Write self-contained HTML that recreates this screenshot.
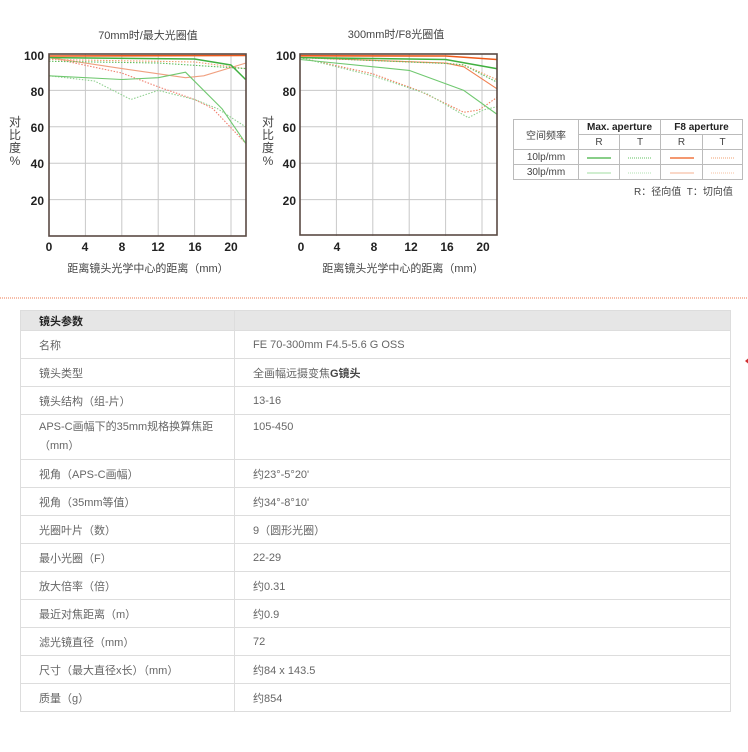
<!DOCTYPE html>
<html><head><meta charset="utf-8"><style>
body{margin:0;width:748px;height:752px;background:#fff;font-family:"Liberation Sans","Noto Sans CJK SC",sans-serif;position:relative;overflow:hidden;color:#333}
.a{position:absolute}
table.lg{position:absolute;left:513px;top:119px;border-collapse:collapse;font-size:10px;color:#444}
table.lg td{border:1px solid #bbb;text-align:center;padding:0;height:14px}
.sp{position:absolute;left:20px;top:310px;width:711px;border-collapse:collapse;font-size:11px;color:#666}
.sp td{border:1px solid #ddd;padding:0 0 0 18px;height:28px;box-sizing:border-box;vertical-align:middle}
.sp tr.h td{background:#e6e6e6;height:20px;color:#222;font-weight:bold}
.sp td:first-child{width:214px}
</style></head><body>
<svg class="a" style="left:0;top:0" width="748" height="300" font-family="Liberation Sans,Noto Sans CJK SC,sans-serif">
<g stroke="#c8c8c8" stroke-width="1">
<line x1="85.4" y1="54" x2="85.4" y2="236"/><line x1="121.8" y1="54" x2="121.8" y2="236"/><line x1="158.2" y1="54" x2="158.2" y2="236"/><line x1="194.6" y1="54" x2="194.6" y2="236"/><line x1="231" y1="54" x2="231" y2="236"/>
<line x1="49" y1="90.4" x2="246" y2="90.4"/><line x1="49" y1="126.8" x2="246" y2="126.8"/><line x1="49" y1="163.2" x2="246" y2="163.2"/><line x1="49" y1="199.6" x2="246" y2="199.6"/>
<line x1="336.4" y1="54" x2="336.4" y2="236"/><line x1="372.8" y1="54" x2="372.8" y2="236"/><line x1="409.2" y1="54" x2="409.2" y2="236"/><line x1="445.6" y1="54" x2="445.6" y2="236"/><line x1="482" y1="54" x2="482" y2="236"/>
<line x1="300" y1="90.4" x2="497" y2="90.4"/><line x1="300" y1="126.8" x2="497" y2="126.8"/><line x1="300" y1="163.2" x2="497" y2="163.2"/><line x1="300" y1="199.6" x2="497" y2="199.6"/>
</g>
<g fill="none" stroke-linejoin="round" stroke-width="1.1">
<polyline stroke="#f08070" stroke-dasharray="1.5 1.5" points="49,57.6 121.8,73 158.2,86.8 194.6,99.5 212.8,108.6 245.6,143.2"/>
<polyline stroke="#90d090" stroke-dasharray="1.5 1.5" points="49,75.8 94.5,81 130.9,99.5 158.2,90.4 194.6,99.5 217.4,108.6 245.6,126.8"/>
<polyline stroke="#f0a080" points="49,57.6 121.8,68.6 185.5,77.7 203.7,75.8 245.6,63.1"/>
<polyline stroke="#70c870" points="49,75.8 121.8,79.5 158.2,77.7 185.5,72.2 221.9,108.6 245.6,143.2"/>
<polyline stroke="#f0a070" stroke-dasharray="1.5 1.5" points="49,59.5 194.6,62 245.6,68.6"/>
<polyline stroke="#60c060" stroke-dasharray="1.5 1.5" points="49,61.3 158.2,63 245.6,68.6"/>
<polyline stroke="#40b040" stroke-width="1.5" points="49,57.6 194.6,59 231,65 245.6,79.5"/>
<polyline stroke="#ee5a1a" stroke-width="1.6" points="49,56 245.6,55.5"/>
<polyline stroke="#f08060" stroke-dasharray="1.5 1.5" points="300,57.6 372.8,73.8 418.3,90.4 463.8,112.3 479,110 496.6,97.7"/>
<polyline stroke="#90d090" stroke-dasharray="1.5 1.5" points="300,57.6 372.8,75.8 427.4,94 468.4,117.7 483,110 496.6,106.8"/>
<polyline stroke="#70c870" points="300,59.5 409.2,70.4 463.8,90.4 496.6,114"/>
<polyline stroke="#f08050" points="300,57.6 445.6,63.1 463.8,66.8 496.6,88.6"/>
<polyline stroke="#f0a070" stroke-dasharray="1.5 1.5" points="300,57.6 445.6,63.1 463.8,64.9 496.6,79.5"/>
<polyline stroke="#60c060" stroke-dasharray="1.5 1.5" points="300,57.6 445.6,63.5 463.8,65 496.6,82"/>
<polyline stroke="#40b040" stroke-width="1.5" points="300,57.6 445.6,59.5 496.6,68.6"/>
<polyline stroke="#ee5a1a" stroke-width="1.6" points="300,55.8 445.6,56 496.6,59.5"/>
</g>
<rect x="49" y="54" width="197" height="182" fill="none" stroke="#5a4a44" stroke-width="1.6"/>
<rect x="300" y="54" width="197" height="181" fill="none" stroke="#5a4a44" stroke-width="1.6"/>
<g font-size="11" fill="#444" text-anchor="middle">
<text x="148" y="39">70mm时/最大光圈值</text><text x="396" y="38">300mm时/F8光圈值</text>
<g font-size="12" font-weight="bold" fill="#222" text-anchor="end">
<text x="44" y="60">100</text><text x="44" y="96">80</text><text x="44" y="132">60</text><text x="44" y="168">40</text><text x="44" y="205">20</text>
<text x="296" y="60">100</text><text x="296" y="96">80</text><text x="296" y="132">60</text><text x="296" y="168">40</text><text x="296" y="205">20</text>
</g>
<g font-size="12" font-weight="bold" fill="#222">
<text x="49" y="251">0</text><text x="85" y="251">4</text><text x="122" y="251">8</text><text x="158" y="251">12</text><text x="195" y="251">16</text><text x="231" y="251">20</text>
<text x="301" y="251">0</text><text x="337" y="251">4</text><text x="374" y="251">8</text><text x="411" y="251">12</text><text x="447" y="251">16</text><text x="483" y="251">20</text>
</g>
<text x="148" y="272">距离镜头光学中心的距离（mm）</text><text x="403" y="272">距离镜头光学中心的距离（mm）</text>
<g font-size="12"><text x="15" y="126">对</text><text x="15" y="139">比</text><text x="15" y="152">度</text><text x="15" y="165">%</text>
<text x="268" y="126">对</text><text x="268" y="139">比</text><text x="268" y="152">度</text><text x="268" y="165">%</text></g>
</g>
<line x1="0" y1="298" x2="748" y2="298" stroke="#ec7a50" stroke-dasharray="1 1"/>
</svg>
<table class="lg">
<tr><td rowspan="2" style="width:64px">空间频率</td><td colspan="2" style="font-weight:bold;color:#222">Max. aperture</td><td colspan="2" style="font-weight:bold;color:#222">F8 aperture</td></tr>
<tr><td style="width:40px">R</td><td style="width:40px">T</td><td style="width:41px">R</td><td style="width:39px">T</td></tr>
<tr><td>10lp/mm</td><td><svg width="24" height="4"><line x1="0" y1="2" x2="24" y2="2" stroke="#40b040" stroke-width="1.3"/></svg></td><td><svg width="24" height="4"><line x1="0" y1="2" x2="24" y2="2" stroke="#60c060" stroke-dasharray="1 1"/></svg></td><td><svg width="24" height="4"><line x1="0" y1="2" x2="24" y2="2" stroke="#ee5a1a" stroke-width="1.3"/></svg></td><td><svg width="24" height="4"><line x1="0" y1="2" x2="24" y2="2" stroke="#f0a070" stroke-dasharray="1 1"/></svg></td></tr>
<tr><td>30lp/mm</td><td><svg width="24" height="4"><line x1="0" y1="2" x2="24" y2="2" stroke="#a0dca0"/></svg></td><td><svg width="24" height="4"><line x1="0" y1="2" x2="24" y2="2" stroke="#b0e0b0" stroke-dasharray="1 1"/></svg></td><td><svg width="24" height="4"><line x1="0" y1="2" x2="24" y2="2" stroke="#f4b090"/></svg></td><td><svg width="24" height="4"><line x1="0" y1="2" x2="24" y2="2" stroke="#f4c0a0" stroke-dasharray="1 1"/></svg></td></tr>
</table>
<div class="a" style="left:634px;top:183px;font-size:10px;color:#444">R：径向值&nbsp;&nbsp;T：切向值</div>
<div class="a" style="left:740px;top:356px;width:0;height:0;border:5px solid transparent;border-right:6px solid #d03030"></div>
<table class="sp">
<tr class="h"><td>镜头参数</td><td></td></tr>
<tr><td>名称</td><td>FE 70-300mm F4.5-5.6 G OSS</td></tr>
<tr><td>镜头类型</td><td>全画幅远摄变焦<b style="color:#444">G镜头</b></td></tr>
<tr><td>镜头结构（组-片）</td><td>13-16</td></tr>
<tr><td style="height:45px;line-height:19px;vertical-align:top;padding-top:3px">APS-C画幅下的35mm规格换算焦距（mm）</td><td style="vertical-align:top;padding-top:6px">105-450</td></tr>
<tr><td>视角（APS-C画幅）</td><td>约23°-5°20'</td></tr>
<tr><td>视角（35mm等值）</td><td>约34°-8°10'</td></tr>
<tr><td>光圈叶片（数）</td><td>9（圆形光圈）</td></tr>
<tr><td>最小光圈（F）</td><td>22-29</td></tr>
<tr><td>放大倍率（倍）</td><td>约0.31</td></tr>
<tr><td>最近对焦距离（m）</td><td>约0.9</td></tr>
<tr><td>滤光镜直径（mm）</td><td>72</td></tr>
<tr><td>尺寸（最大直径x长）（mm）</td><td>约84 x 143.5</td></tr>
<tr><td>质量（g）</td><td>约854</td></tr>
</table>
</body></html>
